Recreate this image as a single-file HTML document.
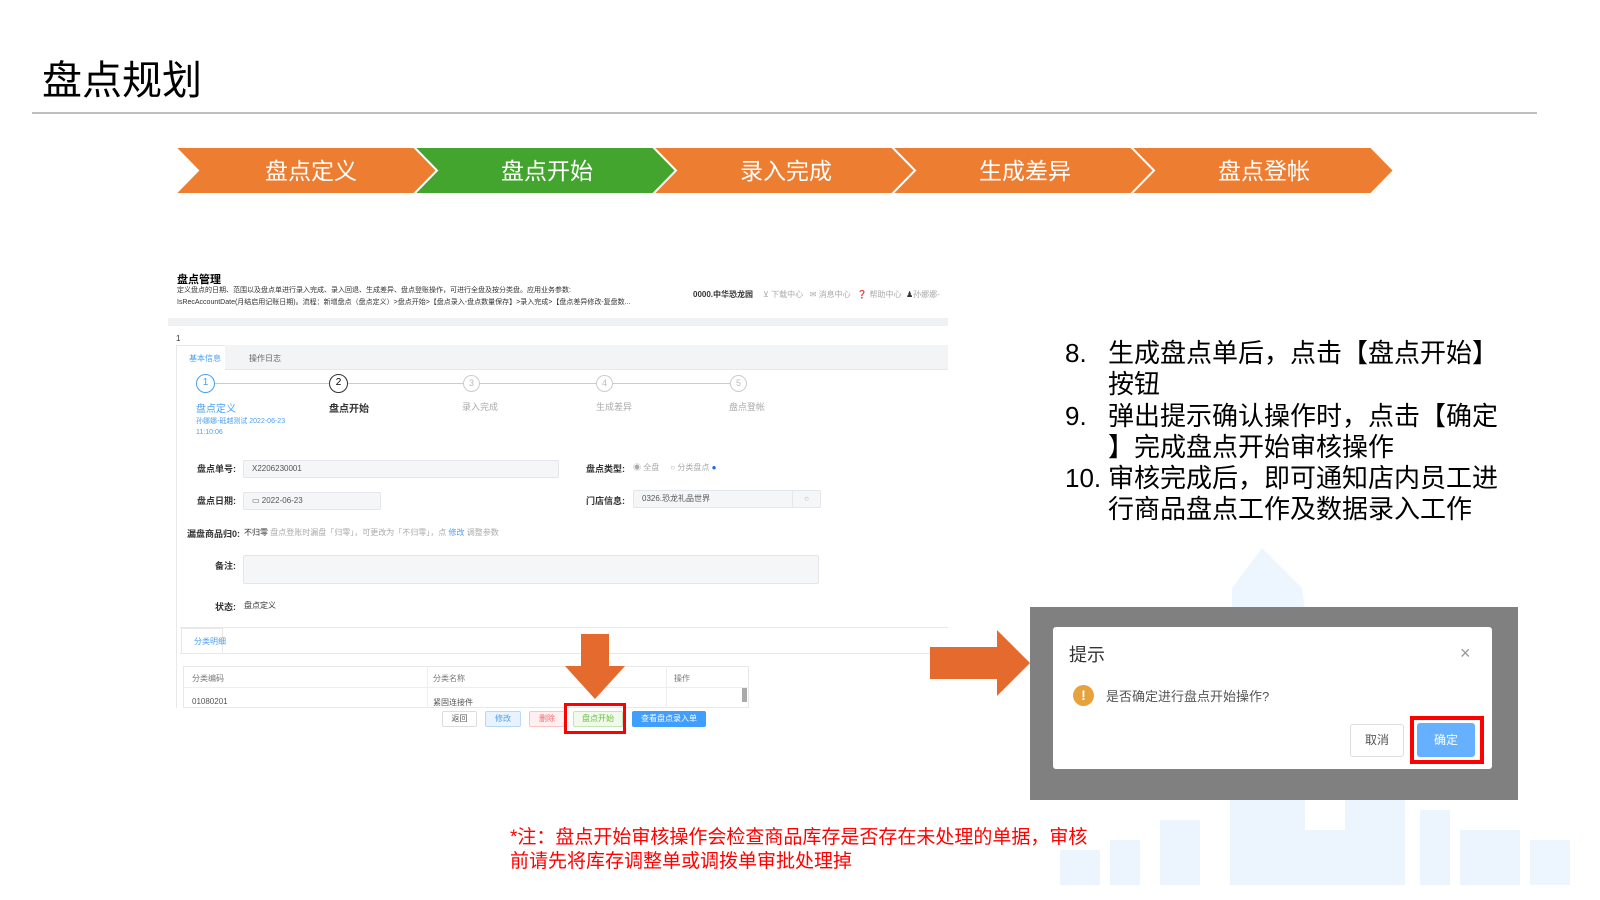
<!DOCTYPE html>
<html><head><meta charset="utf-8">
<style>
*{margin:0;padding:0;box-sizing:border-box}
body{width:1600px;height:900px;position:relative;overflow:hidden;background:#fff;font-family:"Liberation Sans","Noto Sans CJK SC",sans-serif;color:#000}
.a{position:absolute}
.s{font-size:9px;color:#333;white-space:nowrap}
.g{color:#aaa}
.b{color:#4a9ff5}
.inp{position:absolute;background:#f5f6f8;border:1px solid #e4e6ea;border-radius:2px;font-size:8px;color:#555;padding-left:8px;line-height:16px}
.lbl{position:absolute;font-size:9px;color:#333;text-align:right;width:60px;font-weight:bold}
.btn{position:absolute;height:16px;font-size:8px;line-height:14px;text-align:center;border:1px solid #ddd;border-radius:2px}
.list{position:absolute;left:1065px;top:338px;font-size:26px;line-height:31.3px;color:#000}
.list div{position:relative;padding-left:43px;width:436px;line-break:anywhere;word-break:break-all}
.list span{position:absolute;left:0}
</style></head><body>
<div class="a" style="left:42px;top:56px;font-size:40px;line-height:50px">盘点规划</div>
<div class="a" style="left:32px;top:112px;width:1505px;height:2px;background:#bfbfbf"></div>

<svg class="a" style="left:0;top:0" width="1600" height="220">
<g stroke="#fff" stroke-width="2">
<polygon points="175,147 415,147 438,170.5 415,194 175,194 198,170.5" fill="#ED7D31"/>
<polygon points="414,147 654,147 677,170.5 654,194 414,194 437,170.5" fill="#43A52D"/>
<polygon points="653,147 893,147 916,170.5 893,194 653,194 676,170.5" fill="#ED7D31"/>
<polygon points="892,147 1132,147 1155,170.5 1132,194 892,194 915,170.5" fill="#ED7D31"/>
<polygon points="1131,147 1371,147 1394,170.5 1371,194 1131,194 1154,170.5" fill="#ED7D31"/>
</g>
<g fill="#fff" font-size="23" text-anchor="middle" font-family="Liberation Sans,Noto Sans CJK SC,sans-serif">
<text x="311" y="179">盘点定义</text><text x="547" y="179">盘点开始</text><text x="786" y="179">录入完成</text><text x="1025" y="179">生成差异</text><text x="1264" y="179">盘点登帐</text>
</g>
</svg>

<!-- screenshot panel -->
<div class="a" style="left:177px;top:271px;font-size:11px;font-weight:bold">盘点管理</div>
<div class="a s" style="left:177px;top:285px;font-size:7px">定义盘点的日期、范围以及盘点单进行录入完成、录入回退、生成差异、盘点登账操作，可进行全盘及按分类盘。应用业务参数:</div>
<div class="a s" style="left:177px;top:297px;font-size:7px">IsRecAccountDate(月结启用记账日期)。流程：新增盘点（盘点定义）&gt;盘点开始&gt;【盘点录入-盘点数量保存】&gt;录入完成&gt;【盘点差异修改-复盘数...</div>
<div class="a s" style="left:693px;top:289px;font-size:8px;font-weight:bold">0000.中华恐龙园</div>
<div class="a s g" style="left:763px;top:289px;font-size:8px">⊻ 下载中心 &nbsp; ✉ 消息中心 &nbsp; <span style="color:#333">❓</span> 帮助中心 &nbsp;<span style="color:#333">♟</span>孙娜娜-</div>
<div class="a" style="left:168px;top:318px;width:780px;height:8px;background:#f0f1f3"></div>
<div class="a s" style="left:176px;top:334px;font-size:8px">1</div>
<div class="a" style="left:176px;top:345px;width:772px;height:395px;border-left:1px solid #e8e8e8;border-top:1px solid #e8e8e8"></div>
<div class="a" style="left:225px;top:345px;width:723px;height:25px;background:#f3f4f6;border-bottom:1px solid #e8e8e8"></div>
<div class="a s b" style="left:189px;top:353px;font-size:8px">基本信息</div>
<div class="a s" style="left:249px;top:353px;font-size:8px;color:#666">操作日志</div>
<div class="a" style="left:214px;top:383px;width:520px;height:1px;background:#ccc"></div>
<div class="a" style="left:196px;top:374px;width:19px;height:19px;border:1.5px solid #4a9ff5;border-radius:50%;background:#fff;font-size:10px;color:#4a9ff5;text-align:center;line-height:16px">1</div>
<div class="a" style="left:329px;top:374px;width:19px;height:19px;border:1.5px solid #333;border-radius:50%;background:#fff;font-size:10px;text-align:center;line-height:16px">2</div>
<div class="a" style="left:463px;top:375px;width:17px;height:17px;border:1px solid #ccc;border-radius:50%;background:#fff;font-size:9px;color:#bbb;text-align:center;line-height:15px">3</div>
<div class="a" style="left:596px;top:375px;width:17px;height:17px;border:1px solid #ccc;border-radius:50%;background:#fff;font-size:9px;color:#bbb;text-align:center;line-height:15px">4</div>
<div class="a" style="left:730px;top:375px;width:17px;height:17px;border:1px solid #ccc;border-radius:50%;background:#fff;font-size:9px;color:#bbb;text-align:center;line-height:15px">5</div>
<div class="a s b" style="left:196px;top:400px;font-size:10px">盘点定义</div>
<div class="a s" style="left:329px;top:400px;font-size:10px;font-weight:bold">盘点开始</div>
<div class="a s g" style="left:462px;top:400px;font-size:9px">录入完成</div>
<div class="a s g" style="left:596px;top:400px;font-size:9px">生成差异</div>
<div class="a s g" style="left:729px;top:400px;font-size:9px">盘点登帐</div>
<div class="a s b" style="left:196px;top:416px;font-size:7px">孙娜娜-砥越测试 2022-06-23</div>
<div class="a s b" style="left:196px;top:429px;font-size:7px">11:10:06</div>

<div class="lbl" style="left:176px;top:462px">盘点单号:</div>
<div class="inp" style="left:243px;top:460px;width:316px;height:18px">X2206230001</div>
<div class="lbl" style="left:565px;top:462px">盘点类型:</div>
<div class="a s g" style="left:633px;top:462px;font-size:8px">◉ 全盘 &nbsp; &nbsp; ○ 分类盘点 <span style="color:#1a6fe0">●</span></div>
<div class="lbl" style="left:176px;top:494px">盘点日期:</div>
<div class="inp" style="left:243px;top:492px;width:138px;height:18px">▭ 2022-06-23</div>
<div class="lbl" style="left:565px;top:494px">门店信息:</div>
<div class="inp" style="left:633px;top:490px;width:188px;height:18px">0326.恐龙礼品世界<span style="position:absolute;right:0;top:0;width:28px;height:16px;border-left:1px solid #e4e6ea;text-align:center;color:#aaa">○</span></div>
<div class="lbl" style="left:176px;top:527px;width:64px">漏盘商品归0:</div>
<div class="a s" style="left:244px;top:527px;font-size:8px">不归零 <span class="g">盘点登账时漏盘「归零」，可更改为「不归零」，点 <span class="b">修改</span> 调整参数</span></div>
<div class="lbl" style="left:176px;top:559px">备注:</div>
<div class="inp" style="left:243px;top:555px;width:576px;height:29px"></div>
<div class="lbl" style="left:176px;top:600px">状态:</div>
<div class="a s" style="left:244px;top:600px;font-size:8px">盘点定义</div>
<div class="a" style="left:180px;top:627px;width:768px;height:1px;background:#e8e8e8"></div>
<div class="a" style="left:181px;top:628px;width:42px;height:25px;background:#fff;border:1px solid #e8e8e8;border-bottom:none"></div>
<div class="a s b" style="left:194px;top:636px;font-size:8px">分类明细</div>
<div class="a" style="left:180px;top:653px;width:768px;height:1px;background:#e8e8e8"></div>
<div class="a" style="left:183px;top:666px;width:566px;height:42px;border:1px solid #e8e8e8"></div>
<div class="a" style="left:183px;top:687px;width:566px;height:1px;background:#eee"></div>
<div class="a" style="left:427px;top:666px;width:1px;height:42px;background:#eee"></div>
<div class="a" style="left:666px;top:666px;width:1px;height:42px;background:#eee"></div>
<div class="a" style="left:742px;top:688px;width:5px;height:14px;background:#aaa"></div>
<div class="a s g" style="left:192px;top:673px;font-size:8px;color:#777">分类编码</div>
<div class="a s g" style="left:433px;top:673px;font-size:8px;color:#777">分类名称</div>
<div class="a s g" style="left:674px;top:673px;font-size:8px;color:#777">操作</div>
<div class="a s" style="left:192px;top:697px;font-size:8px;color:#555">01080201</div>
<div class="a s" style="left:433px;top:697px;font-size:8px;color:#555">紧固连接件</div>
<div class="a" style="left:168px;top:708px;width:780px;height:32px;background:#fff"></div>
<div class="btn" style="left:442px;top:711px;width:35px;background:#fff;color:#555">返回</div>
<div class="btn" style="left:485px;top:711px;width:36px;background:#e8f3fe;border-color:#b8d8fb;color:#4a9ff5">修改</div>
<div class="btn" style="left:529px;top:711px;width:36px;background:#fef0f0;border-color:#fbc4c4;color:#f56c6c">删除</div>
<div class="btn" style="left:573px;top:711px;width:50px;background:#f0f9eb;border-color:#c2e7b0;color:#67c23a">盘点开始</div>
<div class="btn" style="left:632px;top:711px;width:74px;background:#409eff;border-color:#409eff;color:#fff">查看盘点录入单</div>
<div class="a" style="left:564px;top:703px;width:62px;height:31px;border:3px solid #f00"></div>
<svg class="a" style="left:560px;top:634px" width="70" height="70"><polygon points="21,0 49,0 49,32 65,32 35,65 5,32 21,32" fill="#E46A2E"/></svg>

<!-- list -->
<div class="list">
<div><span>8.</span>生成盘点单后，点击【盘点开始】按钮</div>
<div><span>9.</span>弹出提示确认操作时，点击【确定】完成盘点开始审核操作</div>
<div><span>10.</span>审核完成后，即可通知店内员工进行商品盘点工作及数据录入工作</div>
</div>

<!-- city bg -->
<svg class="a" style="left:1040px;top:540px" width="560" height="345">
<g fill="#d6eafc" opacity="0.45">
<polygon points="222,8 192,48 192,70 265,70 262,48"/>
<rect x="190" y="255" width="75" height="90"/><rect x="305" y="255" width="60" height="90"/>
<rect x="235" y="290" width="130" height="55"/><rect x="120" y="280" width="40" height="65"/>
<rect x="70" y="300" width="30" height="45"/><rect x="380" y="270" width="30" height="75"/>
<rect x="420" y="290" width="60" height="55"/><rect x="20" y="310" width="40" height="35"/>
<rect x="490" y="300" width="40" height="45"/>
</g>
</svg>

<!-- dialog -->
<svg class="a" style="left:930px;top:630px" width="100" height="66"><polygon points="0,17 67,17 67,0 100,33 67,66 67,49 0,49" fill="#E46A2E"/></svg>
<div class="a" style="left:1030px;top:607px;width:488px;height:193px;background:#808080"></div>
<div class="a" style="left:1053px;top:627px;width:439px;height:142px;background:#fff;border-radius:3px"></div>
<div class="a" style="left:1069px;top:641px;font-size:18px;color:#333">提示</div>
<div class="a" style="left:1460px;top:643px;font-size:18px;color:#999">×</div>
<div class="a" style="left:1073px;top:685px;width:21px;height:21px;border-radius:50%;background:#e6a23c;color:#fff;font-size:14px;font-weight:bold;text-align:center;line-height:21px">!</div>
<div class="a" style="left:1106px;top:686px;font-size:13px;color:#555">是否确定进行盘点开始操作?</div>
<div class="a" style="left:1350px;top:724px;width:54px;height:33px;border:1px solid #ddd;border-radius:3px;background:#fff;font-size:12px;color:#555;text-align:center;line-height:31px">取消</div>
<div class="a" style="left:1410px;top:716px;width:74px;height:48px;border:4px solid #f00"></div>
<div class="a" style="left:1417px;top:723px;width:58px;height:34px;background:#66b1ff;border-radius:3px;color:#fff;font-size:12px;text-align:center;line-height:34px">确定</div>

<div class="a" style="left:510px;top:826px;font-size:19px;line-height:24px;color:#f00;width:590px">*注：盘点开始审核操作会检查商品库存是否存在未处理的单据，审核前请先将库存调整单或调拨单审批处理掉</div>
</body></html>
